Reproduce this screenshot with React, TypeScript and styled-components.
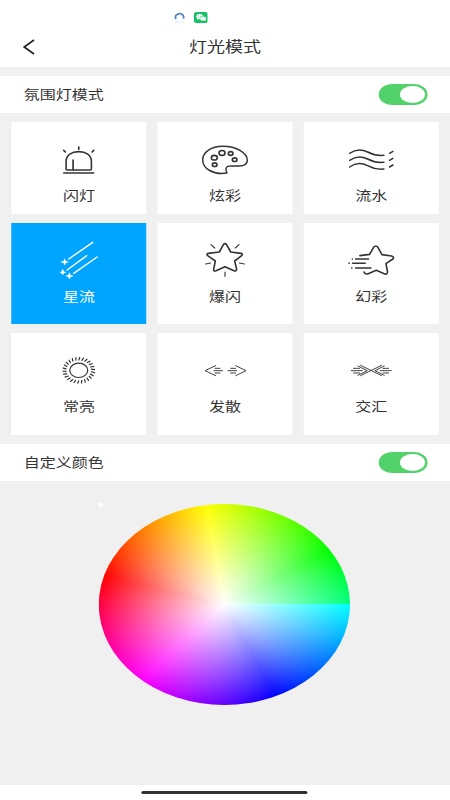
import React, { useState } from "react";
import styled, { createGlobalStyle } from "styled-components";

const GlobalStyle = createGlobalStyle`
  * { box-sizing: border-box; }
  html, body { margin: 0; padding: 0; background: #fff; overflow: hidden; }
  button { font: inherit; color: inherit; border: 0; padding: 0; background: none; }
`;

/* The layout is 360 units wide and fills a 450px wide display. */
const Screen = styled.div`
  width: 360px;
  height: 800px;
  transform: scaleX(1.25);
  transform-origin: 0 0;
  display: flex;
  flex-direction: column;
  background: #f0f0f0;
  color: #333;
  font-family: "Noto Sans CJK SC", sans-serif;
  font-size: 12.8px;
`;

const StatusBar = styled.div`
  height: 27px;
  flex: none;
  padding: 12px 0 0 139.2px;
  display: flex;
  gap: 6.6px;
  background: #fff;
`;

const StatusIcon = styled.svg<{ $w: number }>`
  width: ${(p) => p.$w}px;
  height: 11px;
  display: block;
`;

const Header = styled.header`
  height: 40px;
  flex: none;
  display: grid;
  grid-template-columns: 60px 1fr 60px;
  align-items: center;
  background: #fff;
`;

const BackButton = styled.button`
  height: 40px;
  padding-left: 18px;
  svg { display: block; width: 12px; height: 18px; }
`;

const Title = styled.h1`
  margin: -2px 0 0;
  text-align: center;
  font-size: 14.4px;
  line-height: 20px;
  font-weight: 400;
`;

const SectionBar = styled.div<{ $gap?: number }>`
  height: 37px;
  flex: none;
  margin-top: ${(p) => p.$gap ?? 0}px;
  padding: 0 18.4px 0 19px;
  display: flex;
  align-items: center;
  justify-content: space-between;
  background: #fff;
`;

const SectionLabel = styled.span`
  line-height: 18px;
  padding-bottom: 1px;
`;

const Switch = styled.button<{ $on: boolean }>`
  width: 38.6px;
  height: 20.6px;
  padding: 1.6px;
  border-radius: 11px / 10.3px;
  display: flex;
  justify-content: ${(p) => (p.$on ? "flex-end" : "flex-start")};
  background: ${(p) => (p.$on ? "#51d26a" : "#ccc")};
`;

const Knob = styled.span`
  width: 20.2px;
  height: 17.4px;
  border-radius: 50%;
  background: #fff;
`;

const Grid = styled.div`
  flex: none;
  padding: 9px 9.2px 9.3px 9.4px;
  display: grid;
  grid-template-columns: repeat(3, 1fr);
  grid-template-rows: 92px 101px 101.3px;
  gap: 9.2px;
`;

const Card = styled.button<{ $active: boolean }>`
  padding-top: 16.6px;
  display: flex;
  flex-direction: column;
  align-items: center;
  background: ${(p) => (p.$active ? "#00a5ff" : "#fff")};
  color: ${(p) => (p.$active ? "#fff" : "#333")};
`;

const ModeIcon = styled.svg`
  width: 48px;
  height: 40px;
  flex: none;
  display: block;
  overflow: visible;
  fill: none;
  stroke: currentColor;
  stroke-width: 4.8;
  stroke-linecap: round;
  stroke-linejoin: round;
`;

const ModeName = styled.span`
  margin-top: 7px;
  line-height: 18px;
`;

const Palette = styled.div`
  flex: 1;
  position: relative;
  padding: 22.8px 0.6px 0 0;
  display: flex;
  justify-content: center;
  align-items: flex-start;
`;

const Wheel = styled.div`
  width: 201.4px;
  height: 201.4px;
  border-radius: 50%;
  background:
    radial-gradient(circle closest-side, #fff, rgba(255, 255, 255, 0)),
    conic-gradient(
      from 90deg,
      #00ffff 0deg,
      #0000ff 65.45deg,
      #ff00ff 130.9deg,
      #ff0000 196.4deg,
      #ffff00 261.8deg,
      #00ff00 327.3deg,
      #00ff80 360deg
    );
`;

const Picker = styled.span`
  position: absolute;
  left: 79px;
  top: 22.5px;
  width: 3.4px;
  height: 3.6px;
  border-radius: 30% 30% 50% 50%;
  background: #fff;
`;

const NavBar = styled.div`
  height: 15px;
  flex: none;
  display: flex;
  justify-content: center;
  padding: 6px 0.4px 0 0;
  background: #fff;
`;

const HomeHandle = styled.div`
  width: 133px;
  height: 3.4px;
  border-radius: 2px;
  background: #303032;
`;

const sunRays = Array.from({ length: 26 }, (_, i) => {
  const a = (i / 26) * Math.PI * 2 + 0.12;
  const b = a + 0.07;
  return `M${221 + 37 * Math.cos(a)} ${127 + 30 * Math.sin(a)}L${221 + 49 * Math.cos(b)} ${127 + 40 * Math.sin(b)}`;
}).join("");

const modes: { name: string; box: string; art: React.ReactNode }[] = [
  {
    name: "闪灯",
    box: "131 69 180 120",
    art: (
      <>
        <path d="M185 162Q183 162 183 158V137C183 117 200 107 221 107S259 117 259 137V158Q259 162 256 162Z" />
        <path d="M204 161V132M221 93V100M176 103L181 108M266 103L261 108" strokeWidth="5" />
        <path d="M176 171H266" strokeWidth="5" />
      </>
    ),
  },
  {
    name: "炫彩",
    box: "134 69 180 120",
    art: (
      <>
        <path d="M230 171C188 178 157 157 157 132C157 108 184 91 217 91C260 91 291 112 291 133C291 145 280 150 266 150C253 151 243 148 232 151C226 153 225 164 230 171Z" strokeWidth="4.4" />
        <ellipse cx="215" cy="111" rx="9" ry="7.5" />
        <ellipse cx="241" cy="112.500" rx="7" ry="5.500" />
        <ellipse cx="192" cy="125" rx="9" ry="7" />
        <ellipse cx="253" cy="131" rx="7" ry="5.500" />
        <ellipse cx="193" cy="146" rx="7" ry="5.500" />
      </>
    ),
  },
  {
    name: "流水",
    box: "129 69 180 120",
    art: (
      <>
        {[0, 21, 41].map((dy) => (
          <path
            key={dy}
            d={`M154 ${112 + dy}C171 ${100 + dy} 190 ${99 + dy} 208 ${108 + dy}C225 ${117 + dy} 237 ${120 + dy} 257 ${118 + dy}M274 ${112 + dy}L284 ${106 + dy}`}
            strokeWidth="4.4"
          />
        ))}
      </>
    ),
  },
  {
    name: "星流",
    box: "131 65 180 120",
    art: (
      <>
        <path d="M191 122L263 72M186 155L245 112M206 165L276 116" strokeWidth="4.4" />
        <g fill="currentColor" stroke="currentColor" strokeWidth="1.2">
          <path d="M179 122L182.500 129L190 131L182.500 133L179 140L175.500 133L167 131L175.500 129Z" />
          <path d="M173 153L176.500 160L183 162L176.500 164L173 170L169.500 164L164 162L169.500 160Z" />
          <path d="M193 164L196.500 171L204 173L196.500 175L193 182L189.500 175L182 173L189.500 171Z" />
        </g>
      </>
    ),
  },
  {
    name: "爆闪",
    box: "134 65 180 120",
    art: (
      <>
        <path d="M219 79Q224 73 229 79L241 101L272 105Q279 107 274 112L253 128L259 153Q258 160 251 157L224 145L197 157Q189 160 190 153L195 128L172 112Q167 107 174 105L207 101Z" />
        <path d="M182 79L193 89M266 79L255 89M166 137L181 134M282 137L267 134M224 161V174" strokeWidth="3.400" />
      </>
    ),
  },
  {
    name: "幻彩",
    box: "129 65 180 120",
    art: (
      <>
        <path d="M185 112L214 108L226 87Q233 79 239 87L251 109L280 113Q289 116 284 122L263 136L268 161Q267 170 258 166L234 156L208 167Q200 168 197 161" />
        <path d="M172 122H211M163 135H201M172 149H218" strokeWidth="4.400" />
        <path d="M162 122H162.500M152 135H153M160 149H161" strokeWidth="4.400" />
      </>
    ),
  },
  {
    name: "常亮",
    box: "131 66 180 120",
    art: (
      <>
        <ellipse cx="221" cy="127" rx="27" ry="21.500" strokeWidth="3.600" />
        <path d={sunRays} strokeWidth="3.600" strokeLinecap="butt" />
      </>
    ),
  },
  {
    name: "发散",
    box: "134 66 180 120",
    art: (
      <path
        d="M196 113L164 128L196 143M191 128H217M194 121H209M194 135H209M256 113L287 128L256 143M233 128H259M241 121H256M241 135H256"
        strokeWidth="2.8"
      />
    ),
  },
  {
    name: "交汇",
    box: "575 66 180 120",
    art: (
      <path
        d="M633 112L696 143M696 112L633 143M625 114L653 128L625 142M704 114L676 128L704 142M605 128H638M612 121H630M612 135H630M725 128H692M717 121H700M717 135H700"
        strokeWidth="2.8"
      />
    ),
  },
];

function Toggle({ label }: { label: string }) {
  const [on, setOn] = useState(true);
  return (
    <Switch $on={on} role="switch" aria-checked={on} aria-label={label} onClick={() => setOn(!on)}>
      <Knob />
    </Switch>
  );
}

export default function App() {
  const [active, setActive] = useState("星流");
  return (
    <>
      <GlobalStyle />
      <Screen>
        <StatusBar>
          <StatusIcon $w={9} viewBox="0 0 11 11" preserveAspectRatio="none">
            <path d="M2.300 7A4 3.500 0 1 1 9.300 6.700" fill="none" stroke="#4c82c8" strokeWidth="1.700" />
            <path d="M1 10H10" stroke="#e0eaf5" strokeWidth="1" />
          </StatusIcon>
          <StatusIcon $w={11.6} viewBox="0 0 14.500 11" preserveAspectRatio="none">
            <rect width="14.500" height="11" rx="3" fill="#17c168" />
            <path d="M3.300 7.800L3.700 6.600A3.500 2.700 0 1 1 6.300 7.300L4.800 7.200Z" fill="#fff" />
            <ellipse cx="9.300" cy="6.600" rx="3.200" ry="2.400" fill="#fff" stroke="#17c168" strokeWidth=".5" />
            <path d="M10.500 8.200L12 9.200L11.600 7.500Z" fill="#fff" />
            <g fill="#17c168">
              <circle cx="4.800" cy="4" r=".5" />
              <circle cx="7.200" cy="4" r=".5" />
              <circle cx="8.300" cy="6" r=".4" />
              <circle cx="10.300" cy="6" r=".4" />
            </g>
          </StatusIcon>
        </StatusBar>
        <Header>
          <BackButton aria-label="返回">
            <svg viewBox="0 0 15 18" preserveAspectRatio="none">
              <path d="M11.500 2L1.700 9L11.500 16" fill="none" stroke="#222" strokeWidth="1.700" />
            </svg>
          </BackButton>
          <Title>灯光模式</Title>
        </Header>
        <SectionBar $gap={9}>
          <SectionLabel>氛围灯模式</SectionLabel>
          <Toggle label="氛围灯模式" />
        </SectionBar>
        <Grid>
          {modes.map((m) => (
            <Card key={m.name} $active={m.name === active} onClick={() => setActive(m.name)}>
              <ModeIcon viewBox={m.box} preserveAspectRatio="none">{m.art}</ModeIcon>
              <ModeName>{m.name}</ModeName>
            </Card>
          ))}
        </Grid>
        <SectionBar>
          <SectionLabel>自定义颜色</SectionLabel>
          <Toggle label="自定义颜色" />
        </SectionBar>
        <Palette>
          <Wheel />
          <Picker />
        </Palette>
        <NavBar>
          <HomeHandle />
        </NavBar>
      </Screen>
    </>
  );
}
